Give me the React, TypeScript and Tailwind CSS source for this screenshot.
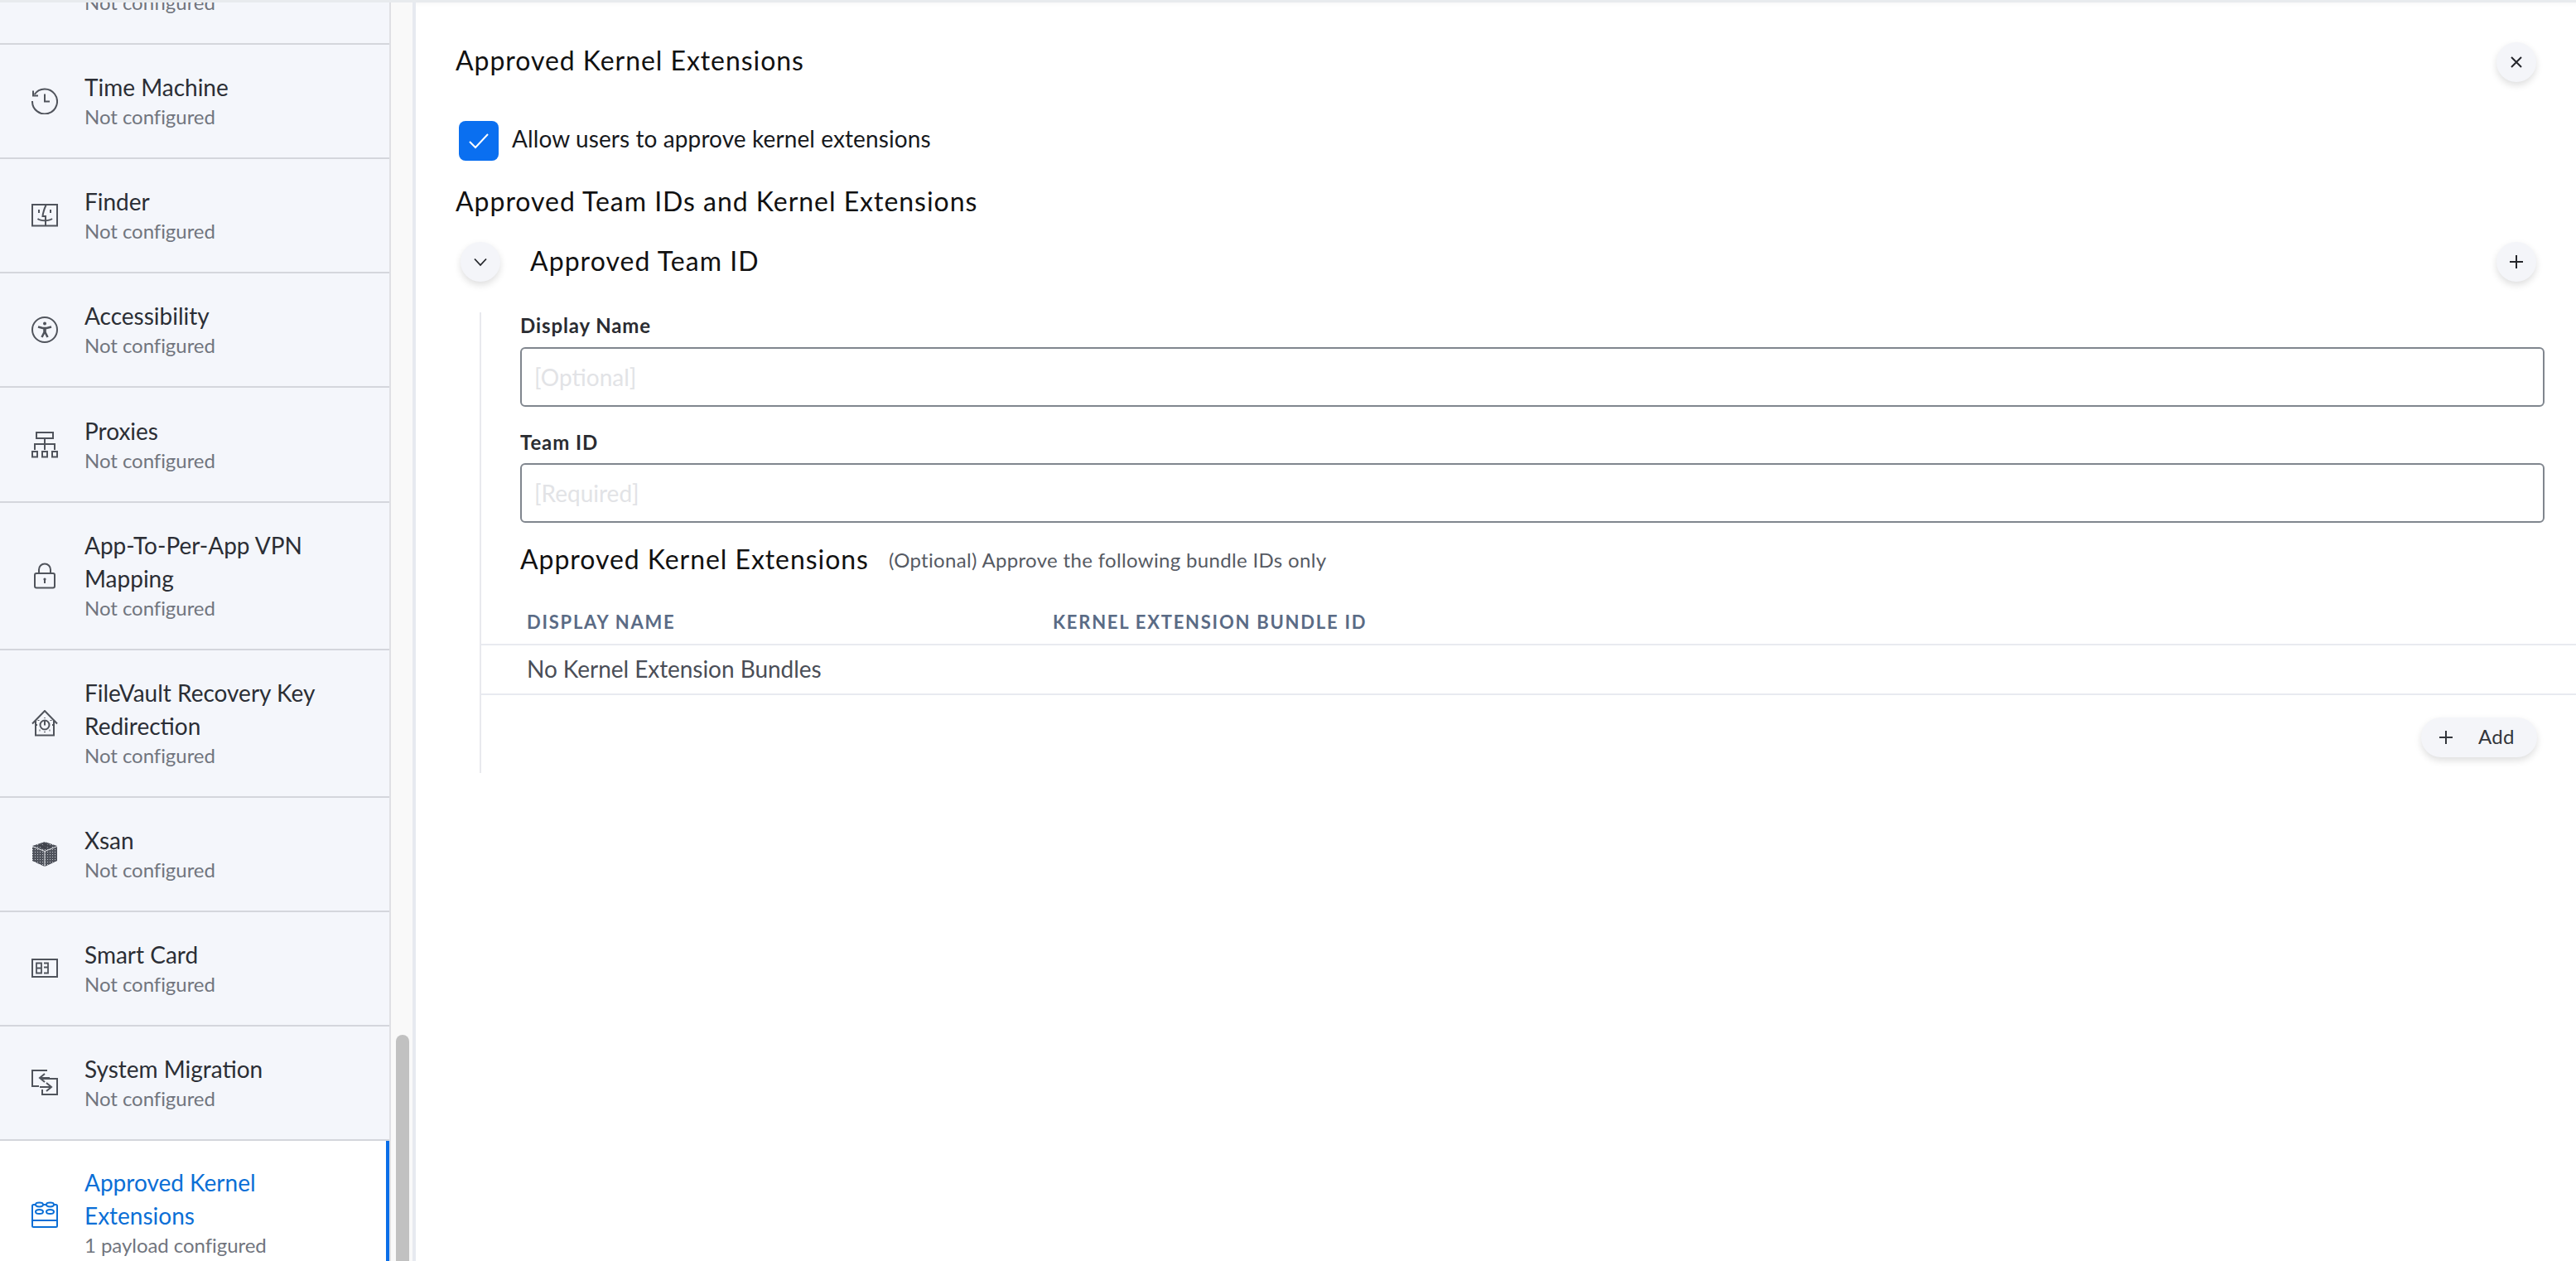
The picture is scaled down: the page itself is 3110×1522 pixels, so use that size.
import React from "react";

const S = { fill: "none", stroke: "currentColor", strokeWidth: 2, strokeLinecap: "butt" as const, strokeLinejoin: "miter" as const };

const Ic = ({ children }: { children: React.ReactNode }) => (
  <svg width="32" height="32" viewBox="0 0 32 32" className="shrink-0" {...S}>{children}</svg>
);

const TimeIcon = () => (
  <Ic>
    <path d="M3.6 8A15 15 0 1 1 1 16" />
    <path d="M2 3.5V9.5H8" />
    <path d="M16 7.5V16.5H22" />
  </Ic>
);
const FinderIcon = () => (
  <Ic>
    <rect x="1" y="3" width="30" height="25.5" />
    <path d="M17.5 3.5C15.5 8 14 12 13.5 17H17V28" />
    <path d="M7.5 20C11 23 21 23 25 20" />
    <path d="M9 9V13M23 9V13" strokeWidth="2" />
  </Ic>
);
const AccessIcon = () => (
  <Ic>
    <circle cx="16" cy="16" r="15" />
    <circle cx="16" cy="8.5" r="2" fill="currentColor" stroke="none" />
    <path d="M8 12.5L13.5 14H18.5L24 12.5" strokeWidth="2.6" />
    <path d="M15.5 14V19L12.5 25M16.5 14V19L19.5 25" strokeWidth="2.6" />
  </Ic>
);
const ProxyIcon = () => (
  <Ic>
    <rect x="6" y="1" width="20" height="7" />
    <path d="M16 8V22M4 22V15H28V22" />
    <rect x="1" y="24" width="6" height="6.5" />
    <rect x="13" y="24" width="6" height="6.5" />
    <rect x="25" y="24" width="6" height="6.5" />
  </Ic>
);
const LockIcon = () => (
  <Ic>
    <rect x="4" y="13" width="24" height="17.5" rx="2" />
    <path d="M9 13V8.5A7 7 0 0 1 23 8.5V13" />
    <circle cx="16" cy="20" r="1.6" fill="currentColor" stroke="none" />
    <path d="M16 20V25" />
  </Ic>
);
const VaultIcon = () => (
  <Ic>
    <path d="M1 16.5L16 1L31 16.5" />
    <path d="M5 13V30.5H27V13" />
    <circle cx="16" cy="18" r="5.5" />
    <path d="M16 13V18.5" />
    <path d="M16 9.2V10M23.5 12V13M25 18H26M21.5 24.5H22.5M16 26V27M9.5 24.5H10.5M6 18H7M8.5 12V13" strokeDasharray="1.5 1" />
  </Ic>
);
const XsanIcon = () => (
  <svg width="32" height="32" viewBox="0 0 32 32" className="shrink-0">
    <defs>
      <pattern id="dots" width="3" height="3" patternUnits="userSpaceOnUse">
        <rect width="3" height="3" fill="#4f535c" />
        <rect x="1" y="1" width="1" height="1" fill="#c3c5cb" />
      </pattern>
    </defs>
    <path d="M16 1L31 6V24L16 31L1 24V6Z" fill="url(#dots)" />
    <path d="M1 6.5L16 12.5L31 6.5M16 12.5V31" fill="none" stroke="#e2e4e8" strokeWidth="1" />
    <path d="M9 5L18 9M14 3.5L23 7.5" fill="none" stroke="#40434b" strokeWidth="2.6" />
  </svg>
);
const CardIcon = () => (
  <Ic>
    <rect x="1" y="5" width="30" height="21" />
    <path d="M6 9.5H12V21.5H6ZM6 15.5H12" strokeWidth="1.8" />
    <path d="M15 9.5H20V14.5H15M20 15.5V21.5H15" strokeWidth="1.8" />
  </Ic>
);
const MigrateIcon = () => (
  <Ic>
    <path d="M19 1H1V20H9" />
    <path d="M12 11H31V30H13V24" />
    <path d="M16 5L10 10L16 15M10 10H22" />
    <path d="M18 16L24 21L18 26M24 21H10" />
  </Ic>
);
const KernelIcon = () => (
  <Ic>
    <rect x="1" y="4" width="30" height="27" rx="1.5" />
    <path d="M1 23H31" />
    <ellipse cx="9.5" cy="12.5" rx="4.5" ry="2.6" />
    <ellipse cx="22.5" cy="12.5" rx="4.5" ry="2.6" />
    <ellipse cx="9.5" cy="4" rx="4.5" ry="2.4" fill="#fff" />
    <ellipse cx="22.5" cy="4" rx="4.5" ry="2.4" fill="#fff" />
  </Ic>
);

const rows = [
  { title: ["Time Machine"], icon: <TimeIcon />, h: "h-[138px]" },
  { title: ["Finder"], icon: <FinderIcon />, h: "h-[138px]" },
  { title: ["Accessibility"], icon: <AccessIcon />, h: "h-[138px]" },
  { title: ["Proxies"], icon: <ProxyIcon />, h: "h-[139px]" },
  { title: ["App-To-Per-App VPN", "Mapping"], icon: <LockIcon />, h: "h-[178px]" },
  { title: ["FileVault Recovery Key", "Redirection"], icon: <VaultIcon />, h: "h-[178px]" },
  { title: ["Xsan"], icon: <XsanIcon />, h: "h-[138px]" },
  { title: ["Smart Card"], icon: <CardIcon />, h: "h-[138px]" },
  { title: ["System Migration"], icon: <MigrateIcon />, h: "h-[138px]" },
];

const RoundButton = ({ children, className = "" }: { children: React.ReactNode; className?: string }) => (
  <button className={"w-12 h-12 rounded-full bg-[#f4f5f9] shadow-[0_4px_8px_rgba(0,0,0,0.13)] flex items-center justify-center text-[#24262b] shrink-0 " + className}>
    {children}
  </button>
);

const Plus = () => (
  <svg width="18" height="18" viewBox="0 0 18 18" fill="none" stroke="currentColor" strokeWidth="2"><path d="M9 1V17M1 9H17" /></svg>
);

export default function App() {
  return (
    <div className="w-[3110px] h-[1522px] overflow-hidden bg-white flex flex-col font-['Lato','Open_Sans',sans-serif]">
      <div className="h-[3px] bg-[#e8ebee] shrink-0" />
      <div className="flex flex-1 min-h-0">
        <aside className="w-[470px] shrink-0 bg-[#f4f6fb] overflow-hidden">
          <div className="mt-[-89px] h-[140px] border-b-2 border-[#d4d6dc] flex items-end pl-[102px] pb-[33px]">
            <div className="text-[24px] leading-[32px] text-[#71757e] tracking-[-0.05px]">Not configured</div>
          </div>
          {rows.map((r) => (
            <div key={r.title[0]} className={"flex items-center pl-[38px] border-b-2 border-[#d4d6dc] text-[#50545c] box-border " + r.h}>
              {r.icon}
              <div className="ml-[32px] mt-[-2px]">
                {r.title.map((t) => (
                  <div key={t} className="text-[28px] leading-[40px] text-[#2b2e35] tracking-normal">{t}</div>
                ))}
                <div className="text-[24px] leading-[32px] text-[#71757e] tracking-[-0.05px]">Not configured</div>
              </div>
            </div>
          ))}
          <div className="h-[178px] flex items-center pl-[38px] bg-white border-r-4 border-[#0a6ee8] text-[#0b6fd6]">
            <KernelIcon />
            <div className="ml-[32px] mt-[-6px]">
              <div className="text-[28px] leading-[40px] tracking-normal">Approved Kernel</div>
              <div className="text-[28px] leading-[40px] tracking-normal">Extensions</div>
              <div className="text-[24px] leading-[32px] text-[#71757e] tracking-[-0.05px]">1 payload configured</div>
            </div>
          </div>
        </aside>

        <div className="w-[28px] shrink-0 bg-[#f9f9f9] border-l-2 border-[#dfe0e4] flex flex-col justify-end pl-[6px]">
          <div className="w-4 h-[273px] bg-[#c1c1c1] rounded-t-lg" />
        </div>

        <main className="flex-1 min-w-0 border-l-4 border-[#e7eaf0] shadow-[inset_0_6px_6px_-6px_rgba(0,0,0,0.06)]">
          <div className="flex justify-between items-start pl-[48px] pr-[48px] pt-[48px]">
            <h1 className="text-[32px] leading-[44px] text-[#111] font-normal tracking-[0.95px]">Approved Kernel Extensions</h1>
            <RoundButton>
              <svg width="16" height="16" viewBox="0 0 16 16" fill="none" stroke="currentColor" strokeWidth="2"><path d="M2 2L14 14M14 2L2 14" /></svg>
            </RoundButton>
          </div>

          <div className="flex items-center ml-[52px] mt-[47px]">
            <div className="w-12 h-12 rounded-lg bg-[#0a6ff0] flex items-center justify-center">
              <svg width="24" height="20" viewBox="0 0 24 20" fill="none" stroke="#fff" strokeWidth="2"><path d="M1 11L8 18L23 2" /></svg>
            </div>
            <span className="ml-4 text-[28px] leading-[40px] text-[#17191d] mt-[-6px] tracking-[0.1px]">Allow users to approve kernel extensions</span>
          </div>

          <h2 className="ml-[48px] mt-[29px] text-[32px] leading-[40px] text-[#111] font-normal tracking-[0.97px]">Approved Team IDs and Kernel Extensions</h2>

          <div className="flex items-center justify-between ml-[54px] mr-[48px] mt-[29px]">
            <div className="flex items-center">
              <RoundButton>
                <svg width="18" height="11" viewBox="0 0 18 11" fill="none" stroke="currentColor" strokeWidth="1.8"><path d="M2 1.5L9 9L16 1.5" /></svg>
              </RoundButton>
              <span className="ml-[36px] text-[32px] leading-[40px] text-[#111] mt-[-3px] tracking-[1.05px]">Approved Team ID</span>
            </div>
            <RoundButton><Plus /></RoundButton>
          </div>

          <section className="ml-[77px] mt-[38px] border-l-2 border-[#e8e9ee]">
            <div className="pl-[47px] pr-[38px]">
              <label className="block text-[24px] leading-[32px] font-bold text-[#2a2c31] tracking-[0.9px] mt-[-1px]">Display Name</label>
              <input placeholder="[Optional]" className="mt-[10px] block w-full h-[72px] box-border border-2 border-[#80868e] rounded-md px-[15px] text-[28px] bg-white outline-none placeholder:text-[#e2e3e6]" />
              <label className="block mt-[27px] text-[24px] leading-[32px] font-bold text-[#2a2c31] tracking-[0.9px]">Team ID</label>
              <input placeholder="[Required]" className="mt-[9px] block w-full h-[72px] box-border border-2 border-[#80868e] rounded-md px-[15px] text-[28px] bg-white outline-none placeholder:text-[#e2e3e6]" />
              <div className="flex items-center mt-[24px] h-[40px]">
                <h3 className="text-[32px] leading-[40px] text-[#111] font-normal tracking-[0.95px]">Approved Kernel Extensions</h3>
                <span className="ml-6 text-[24px] leading-[32px] text-[#565a63] mt-[2px] tracking-[0.33px]">(Optional) Approve the following bundle IDs only</span>
              </div>
            </div>
            <div className="mt-[28px] h-[56px] flex items-center pl-[55px] border-b-2 border-[#e8eaf0] text-[22px] font-bold text-[#5a6b85] tracking-[1.75px]">
              <span className="w-[635px]">DISPLAY NAME</span>
              <span>KERNEL EXTENSION BUNDLE ID</span>
            </div>
            <div className="h-[60px] flex items-center pl-[55px] pb-[2px] border-b-2 border-[#e8eaf0] text-[28px] text-[#4a4e57] tracking-[-0.05px]">
              No Kernel Extension Bundles
            </div>
            <div className="flex justify-end pr-[47px] pt-[27px] pb-[19px]">
              <button className="w-[140px] h-12 rounded-full bg-[#f4f5f9] shadow-[0_4px_8px_rgba(0,0,0,0.13)] flex items-center pl-[21px] text-[#33363c]">
                <Plus />
                <span className="ml-[30px] text-[24px] leading-[32px] tracking-[0.3px] mt-[-2px]">Add</span>
              </button>
            </div>
          </section>
        </main>
      </div>
    </div>
  );
}
